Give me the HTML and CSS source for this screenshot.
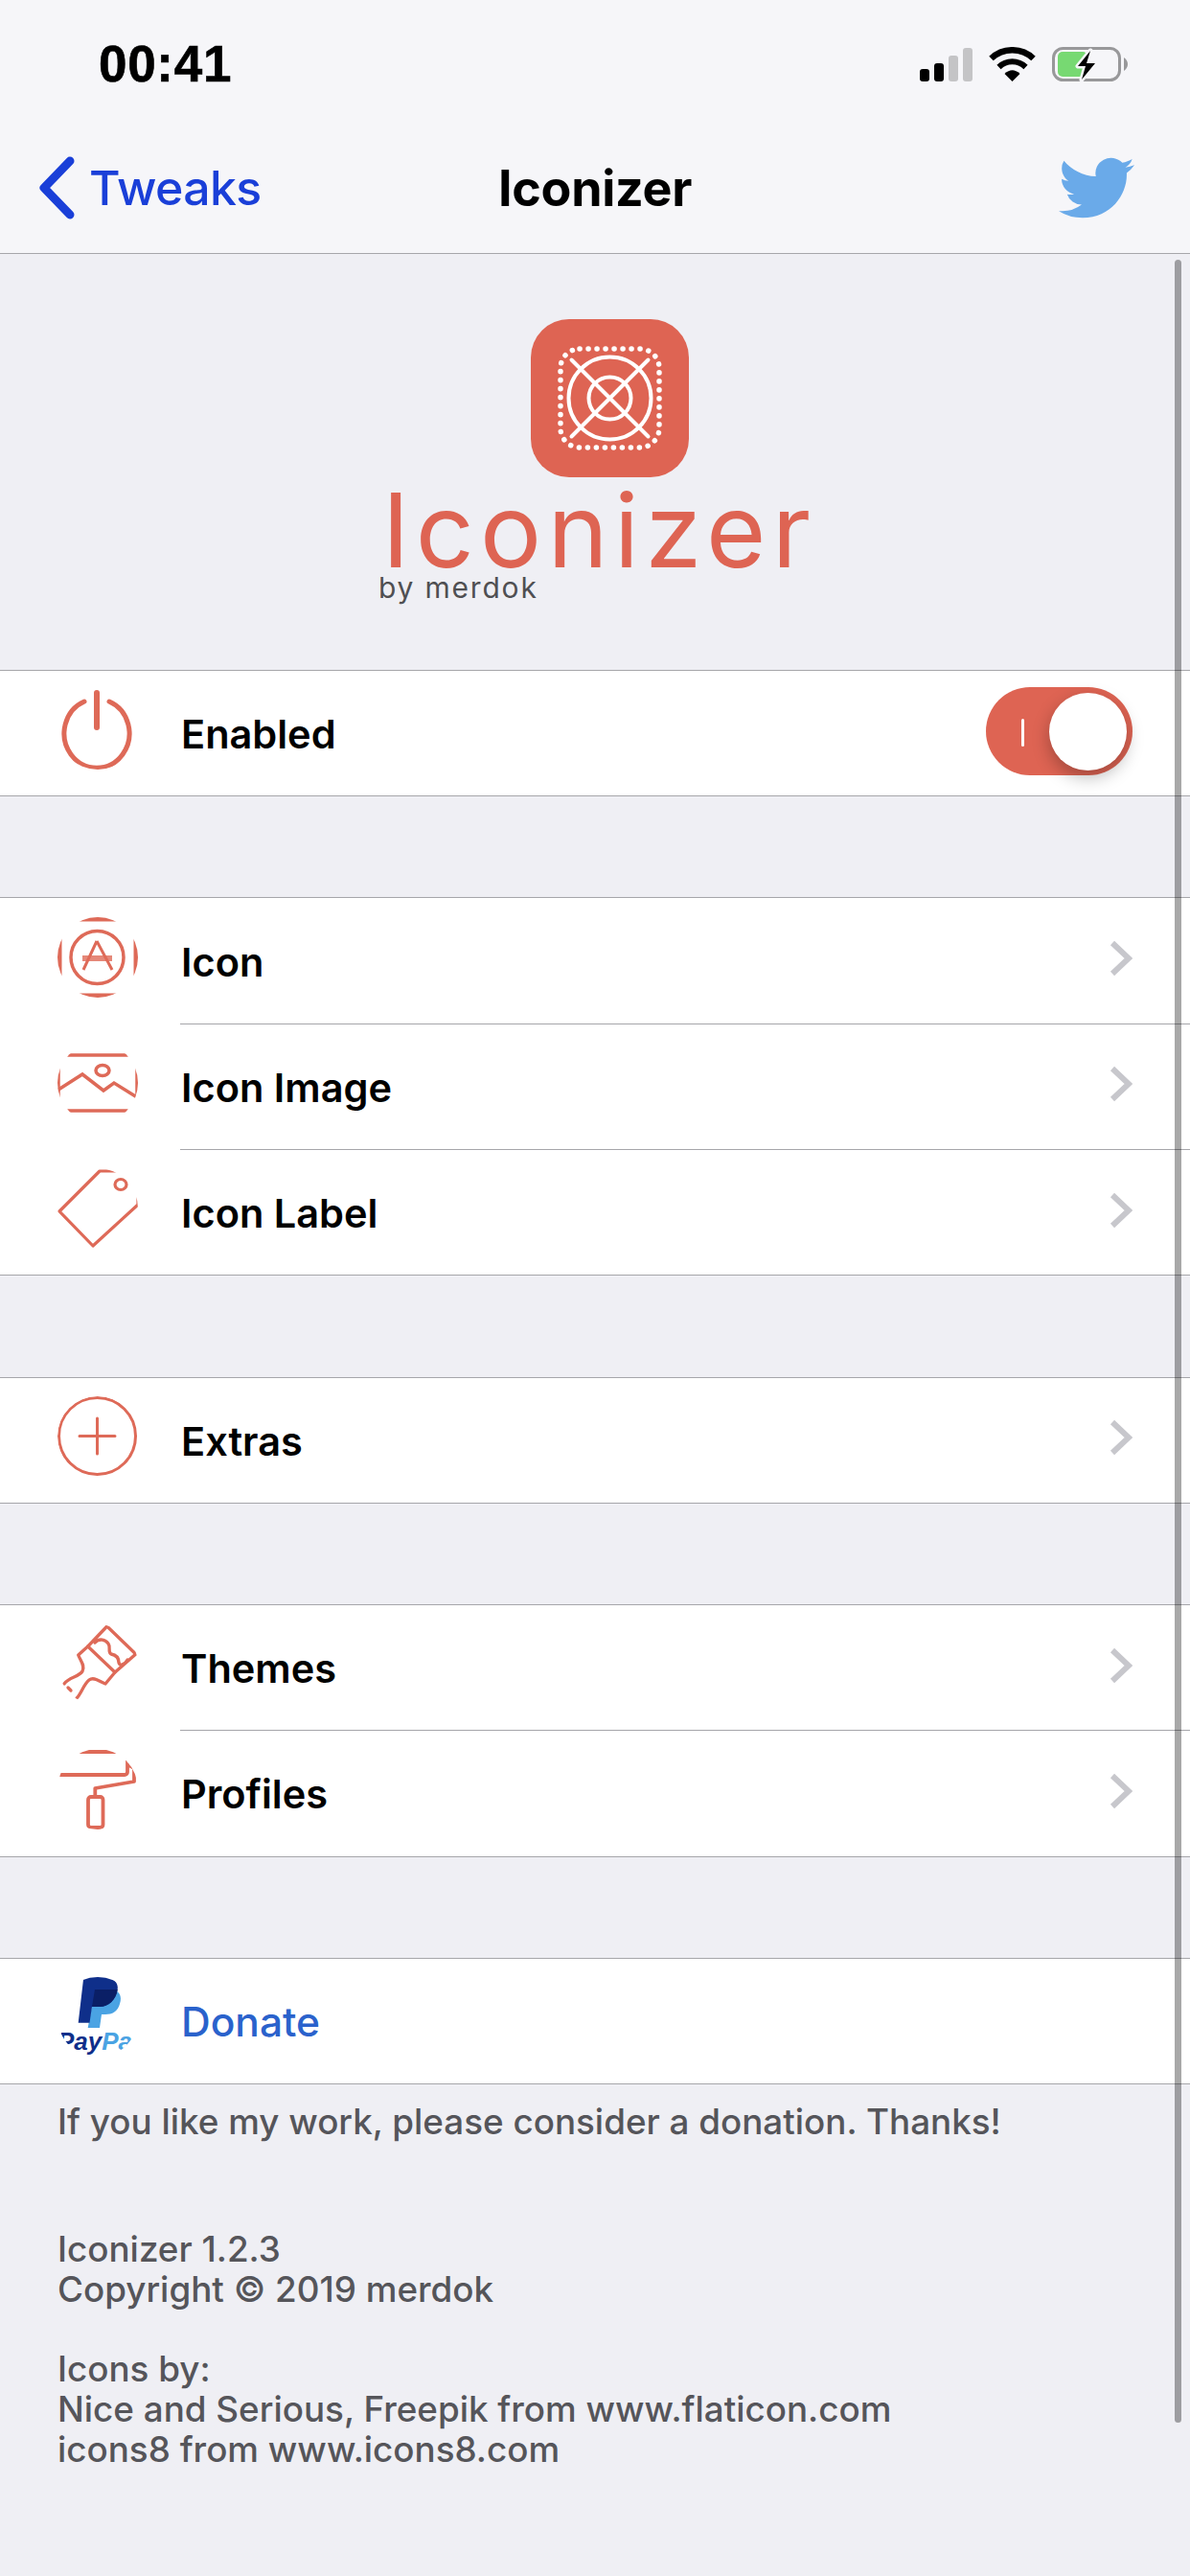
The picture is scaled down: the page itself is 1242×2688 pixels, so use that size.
FILE: index.html
```html
<!DOCTYPE html>
<html lang="en">
<head>
<meta charset="utf-8">
<title>Iconizer</title>
<link rel="stylesheet" href="styles.css">
</head>
<body>
<div class="page">
  <header class="topbar">
    <div class="status">
      <span class="time">00:41</span>
      <div class="status-icons">
        <div class="signal">
          <i class="bar b1"></i><i class="bar b2"></i><i class="bar b3 off"></i><i class="bar b4 off"></i>
        </div>
        <svg class="wifi" viewBox="0 0 49 36" width="49" height="36">
          <path d="M2.5 12 A32 32 0 0 1 46.5 12" fill="none" stroke="#000" stroke-width="6.5"/>
          <path d="M10.5 21 A20 20 0 0 1 38.5 21" fill="none" stroke="#000" stroke-width="6"/>
          <path d="M16.5 28 Q24.5 20.5 32.500 28 L24.500 36 Z" fill="#000"/>
        </svg>
        <svg class="battery" viewBox="0 0 80 36" width="80" height="36">
          <rect x="1.500" y="1.500" width="69" height="33" rx="10" fill="none" stroke="#98989a" stroke-width="3"/>
          <path d="M75 11 Q79 14 79 18 Q79 22 75 25 Z" fill="#98989a"/>
          <rect x="6" y="5" width="31" height="26" rx="5" fill="#77d972"/>
          <path d="M40 4 L27 20 H35 L31 34 L45 17 H36 Z" fill="#000" stroke="#f6f6f9" stroke-width="5" paint-order="stroke" stroke-linejoin="round"/>
        </svg>
      </div>
    </div>
    <nav class="navbar">
      <div class="nav-side">
        <svg class="back" viewBox="0 0 38 66" width="38" height="66">
          <path d="M33 5 L6 33 L33 61" fill="none" stroke="#1a3fd8" stroke-width="9" stroke-linecap="round" stroke-linejoin="round"/>
        </svg>
        <span class="back-label">Tweaks</span>
      </div>
      <span class="nav-title">Iconizer</span>
      <div class="nav-side nav-side-end">
        <svg class="bird" viewBox="0 2 24 20" width="79" height="64" preserveAspectRatio="none">
          <path fill="#6aaae9" d="M23.953 4.570a10 10 0 01-2.825.775 4.958 4.958 0 002.163-2.723c-.951.555-2.005.959-3.127 1.184a4.920 4.920 0 00-8.384 4.482C7.690 8.095 4.067 6.130 1.640 3.162a4.822 4.822 0 00-.666 2.475c0 1.710.870 3.213 2.188 4.096a4.904 4.904 0 01-2.228-.616v.060a4.923 4.923 0 003.946 4.827 4.996 4.996 0 01-2.212.085 4.936 4.936 0 004.604 3.417 9.867 9.867 0 01-6.102 2.105c-.390 0-.779-.023-1.170-.067a13.995 13.995 0 007.557 2.209c9.053 0 13.998-7.496 13.998-13.985 0-.210 0-.420-.015-.630A9.935 9.935 0 0024 4.590z"/>
        </svg>
      </div>
    </nav>
  </header>

  <div class="hero">
    <svg class="app-icon" viewBox="0 0 165 165" width="165" height="165">
      <rect width="165" height="165" rx="40" fill="#de6453"/>
      <rect x="31" y="31" width="103" height="103" rx="20" fill="none" stroke="#fff" stroke-width="5.500" stroke-linecap="round" stroke-dasharray="0.100 8.900"/>
      <g fill="none" stroke="#fff" stroke-width="4" stroke-linecap="round">
        <circle cx="82.500" cy="82.500" r="43"/>
        <circle cx="82.500" cy="82.500" r="22"/>
        <path d="M42.500 42.500 L122.500 122.500 M122.500 42.500 L42.500 122.500"/>
      </g>
    </svg>
    <div class="wordmark">Iconizer</div>
    <div class="byline">by merdok</div>
  </div>

  <section class="group">
    <div class="row">
      <svg class="icon" viewBox="0 0 84 84">
        <path d="M28 13 A34 36 0 1 0 54 13" fill="none" stroke="#de6a58" stroke-width="5" stroke-linecap="round"/>
        <path d="M41 4 V40" fill="none" stroke="#de6a58" stroke-width="6" stroke-linecap="round"/>
      </svg>
      <div class="row-body">
        <span class="label">Enabled</span>
        <div class="toggle"><i class="toggle-mark"></i><i class="toggle-knob"></i></div>
      </div>
    </div>
  </section>

  <section class="group">
    <div class="row">
      <svg class="icon" viewBox="0 0 84 84">
        <g fill="none" stroke="#de6a58">
          <rect x="2" y="2" width="80" height="80" rx="6" stroke-width="5"/>
          <circle cx="41.500" cy="42" r="27.500" stroke-width="3.500"/>
          <path d="M41 25 L27 55 M41 25 L57 55" stroke-width="3"/>
          <path d="M26 43 H57" stroke-width="6" stroke-opacity=".8"/>
        </g>
      </svg>
      <div class="row-body"><span class="label">Icon</span><svg class="chevron" viewBox="0 0 24 38" width="24" height="38"><path d="M3 3 L20 19 L3 35" fill="none" stroke="#c7c7cc" stroke-width="6"/></svg></div>
    </div>
    <div class="row">
      <svg class="icon" viewBox="0 0 84 84">
        <g fill="none" stroke="#de6a58" stroke-width="3.500">
          <rect x="1" y="13" width="82" height="58" rx="2"/>
          <path d="M1 49 L26 33 L48 50 L59 42 L83 57"/>
          <ellipse cx="47" cy="29" rx="7" ry="5.500"/>
        </g>
      </svg>
      <div class="row-body"><span class="label">Icon Image</span><svg class="chevron" viewBox="0 0 24 38" width="24" height="38"><path d="M3 3 L20 19 L3 35" fill="none" stroke="#c7c7cc" stroke-width="6"/></svg></div>
    </div>
    <div class="row">
      <svg class="icon" viewBox="0 0 84 84">
        <g fill="none" stroke="#de6a58" stroke-width="3.200" stroke-linejoin="round">
          <path d="M2 45 L44 3 H84 V38 L37 81 Z"/>
          <ellipse cx="66" cy="17" rx="6" ry="5.500"/>
        </g>
      </svg>
      <div class="row-body"><span class="label">Icon Label</span><svg class="chevron" viewBox="0 0 24 38" width="24" height="38"><path d="M3 3 L20 19 L3 35" fill="none" stroke="#c7c7cc" stroke-width="6"/></svg></div>
    </div>
  </section>

  <section class="group">
    <div class="row">
      <svg class="icon" viewBox="0 0 84 84">
        <g fill="none" stroke="#de6a58" stroke-width="3">
          <circle cx="41.500" cy="41.500" r="40"/>
          <path d="M23 41.500 H60 M41.500 23 V60" stroke-linecap="round"/>
        </g>
      </svg>
      <div class="row-body"><span class="label">Extras</span><svg class="chevron" viewBox="0 0 24 38" width="24" height="38"><path d="M3 3 L20 19 L3 35" fill="none" stroke="#c7c7cc" stroke-width="6"/></svg></div>
    </div>
  </section>

  <section class="group">
    <div class="row">
      <svg class="icon" viewBox="0 0 84 84">
        <g fill="none" stroke="#de6a58" stroke-width="3.300" stroke-linejoin="round" stroke-linecap="round">
          <path d="M31.700 23 L51.700 2 L81.700 31 L60 50 Z"/>
          <path d="M39 19 C44 14 50 16 53 20 C56 24 52 29 56 31 C62 32 64 36 64 40 C65 44 70 42 73 37"/>
          <path d="M31.700 23 L21.700 32 C24 38 29 43 26 49 C22 55 12 55 7 62 M20 77 C25 72 27 63 33 58 C38 54 44 60 50 62 L60 50"/>
          <path d="M11 66 L14 69"/>
        </g>
      </svg>
      <div class="row-body"><span class="label">Themes</span><svg class="chevron" viewBox="0 0 24 38" width="24" height="38"><path d="M3 3 L20 19 L3 35" fill="none" stroke="#c7c7cc" stroke-width="6"/></svg></div>
    </div>
    <div class="row">
      <svg class="icon" viewBox="0 0 84 84">
        <g fill="none" stroke="#de6a58" stroke-width="3.800" stroke-linejoin="round">
          <rect x="-6" y="3" width="79" height="24" rx="3"/>
          <path d="M73 16 L80 20 V34 L39.300 41 V50"/>
          <rect x="32" y="50" width="15.500" height="32" rx="3"/>
        </g>
      </svg>
      <div class="row-body"><span class="label">Profiles</span><svg class="chevron" viewBox="0 0 24 38" width="24" height="38"><path d="M3 3 L20 19 L3 35" fill="none" stroke="#c7c7cc" stroke-width="6"/></svg></div>
    </div>
  </section>

  <section class="group">
    <div class="row">
      <svg class="icon" viewBox="0 0 84 84">
        <path fill="#4aa3e3" d="M39 13 H56 C64 13 68 20 65 28 C63 36 57 39 50 39 H46 L44 53 H31.700 Z"/>
        <path fill="#0f2f8a" d="M27.300 0 H48 C58 0 64 6 62.700 13 C61 24 53 31 44 31 H36 L33.500 47.700 H21.700 Z"/>
        <path fill="#0a1f66" d="M39 13 H62.700 C61 24 53 31 44 31 H36 Z"/>
        <text class="pp" x="0" y="76"><tspan fill="#0f2f8a">Pay</tspan><tspan fill="#4aa3e3">Pal</tspan></text>
      </svg>
      <div class="row-body"><span class="label label-link">Donate</span></div>
    </div>
  </section>

  <footer class="notes">
    <p>If you like my work, please consider a donation. Thanks!</p>
    <p class="notes-version">Iconizer 1.2.3<br>Copyright © 2019 merdok</p>
    <p class="notes-credits">Icons by:<br>Nice and Serious, Freepik from www.flaticon.com<br>icons8 from www.icons8.com</p>
  </footer>

  <div class="scrollbar"></div>
</div>
</body>
</html>
```

FILE: styles.css
```css
* { box-sizing: border-box; }
html, body { margin: 0; padding: 0; }
body { background: #efeff4; font-family: Inter, "Liberation Sans", sans-serif; color: #000; }

.page { position: relative; width: 1242px; height: 2688px; overflow: hidden; background: #efeff4; }

.topbar { height: 265px; background: #f6f6f9; border-bottom: 1px solid #a6a6aa; }

.status { height: 132px; display: flex; align-items: flex-start; justify-content: space-between; padding: 49px 64px 0 103px; }
.time { font-family: "Liberation Sans", Arial, sans-serif; font-weight: 700; font-size: 53px; line-height: 36px; letter-spacing: 0.7px; -webkit-text-stroke: 0.6px #000; }
.status-icons { display: flex; align-items: flex-start; }
.signal { display: flex; align-items: flex-end; gap: 5px; height: 36px; margin-right: 17px; }
.bar { display: block; width: 10px; background: #000; border-radius: 3px; }
.bar.off { background: #c4c4c6; }
.b1 { height: 13px; }
.b2 { height: 19px; }
.b3 { height: 27px; }
.b4 { height: 35px; }
.wifi { margin-right: 17px; display: block; }
.battery { display: block; }

.navbar { height: 132px; display: flex; align-items: center; justify-content: space-between; padding: 0 60px 4px; }
.nav-side { flex: 1; display: flex; align-items: center; }
.nav-side-end { justify-content: flex-end; }
.back { display: block; margin: 0 15px 0 -20px; }
.back-label { color: #1a3fd8; font-size: 50px; font-weight: 500; letter-spacing: -0.6px; }
.nav-title { font-size: 52px; font-weight: 700; letter-spacing: -0.3px; }
.bird { display: block; margin-right: -2px; }

.hero { height: 434px; display: flex; flex-direction: column; align-items: center; padding-top: 68px; }
.app-icon { display: block; margin-left: 30px; }
.wordmark { font-weight: 400; font-size: 107px; line-height: 80px; color: #de6453; letter-spacing: 6.3px; margin-top: 15px; margin-left: 9px; }
.byline { align-self: flex-start; margin-left: 395px; margin-top: 3px; font-weight: 400; font-size: 30px; line-height: 34px; color: #4f4f52; letter-spacing: 1.8px; }

.group { background: #fff; border-top: 1px solid #a6a6aa; margin-bottom: 105.1px; }
.row { height: 131.33px; display: flex; align-items: center; padding-left: 60px; }
.row:last-child { border-bottom: 1px solid #a6a6aa; }
.icon { display: block; width: 84px; height: 84px; flex: none; margin: 0 44px 8px 0; border-radius: 50%; overflow: hidden; }
.row-body { flex: 1; height: 100%; display: flex; align-items: center; justify-content: space-between; padding-right: 60px; border-bottom: 1px solid #a6a6aa; }
.row:last-child .row-body { border-bottom: none; }
.label { font-size: 41.5px; font-weight: 600; margin: 2px 0 0 1px; }
.label-link { color: #2a62cc; font-size: 42.5px; font-weight: 500; }
.chevron { display: block; margin-bottom: 5px; }

.toggle { position: relative; width: 153px; height: 92px; border-radius: 46px; background: #de6453; margin-bottom: 4px; }
.toggle-mark { position: absolute; left: 37px; top: 33px; width: 3px; height: 29px; background: #fff; border-radius: 2px; }
.toggle-knob { position: absolute; right: 6px; top: 6px; width: 81px; height: 81px; border-radius: 50%; background: #fff; box-shadow: 0 7px 18px rgba(0, 0, 0, .28); }

.pp { font-family: "Liberation Sans", Arial, sans-serif; font-weight: 700; font-style: italic; font-size: 26px; }

.notes { margin-top: -87px; padding: 0 60px; color: #55555a; font-size: 36.8px; line-height: 42px; font-weight: 500; }
.notes p { margin: 0; }
.notes .notes-version { margin-top: 91px; }
.notes .notes-credits { margin-top: 41px; }

.scrollbar { position: absolute; left: 1226px; top: 271px; width: 7px; height: 2257px; border-radius: 4px; background: rgba(0, 0, 0, .34); }
```
